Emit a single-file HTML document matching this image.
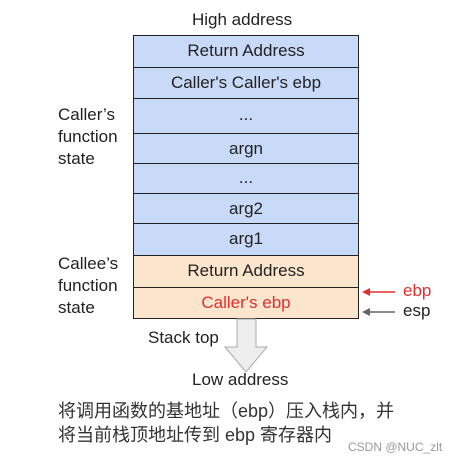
<!DOCTYPE html>
<html><head><style>
body{margin:0;width:456px;height:463px;background:#fff;position:relative;overflow:hidden;font-family:"Liberation Sans",Arial,sans-serif;color:#222}
.t{position:absolute;white-space:nowrap}
.row{position:absolute;left:133px;width:226px;border:1.5px solid #222;border-bottom:none;text-align:center;font-size:17px;box-sizing:border-box}
.b{background:#c9daf8}.o{background:#fce5cd}
.cn{position:absolute;left:58px;font-size:18px;font-family:"Liberation Sans","Noto Sans CJK SC",sans-serif;color:#333;white-space:nowrap}
</style></head><body>
<div class="t" style="left:192px;top:10px;font-size:17px">High address</div>
<div class="row b" style="top:35px;height:32px;line-height:30px">Return Address</div>
<div class="row b" style="top:67px;height:31px;line-height:30px">Caller's Caller's ebp</div>
<div class="row b" style="top:98px;height:35px;line-height:32px">...</div>
<div class="row b" style="top:133px;height:30px;line-height:30px">argn</div>
<div class="row b" style="top:163px;height:30px;line-height:28px">...</div>
<div class="row b" style="top:193px;height:30px;line-height:30px">arg2</div>
<div class="row b" style="top:223px;height:32px;line-height:30px">arg1</div>
<div class="row o" style="top:255px;height:32px;line-height:30px">Return Address</div>
<div class="row o" style="top:287px;height:32px;line-height:30px;color:#e03030;border-bottom:1.5px solid #222">Caller's ebp</div>
<div class="t" style="left:58px;top:104px;font-size:17px;line-height:22px">Caller’s<br>function<br>state</div>
<div class="t" style="left:58px;top:253px;font-size:17px;line-height:22px">Callee’s<br>function<br>state</div>
<svg style="position:absolute;left:0;top:0" width="456" height="463">
<line x1="395" y1="292" x2="368" y2="292" stroke="#e03030" stroke-width="1.5"/>
<polygon points="362,292 370,288 370,296" fill="#e03030"/>
<line x1="395" y1="312" x2="368" y2="312" stroke="#666" stroke-width="1.5"/>
<polygon points="362,312 370,308 370,316" fill="#666"/>
<polygon points="237,319 256,319 256,347 267,347 246,372 225,347 237,347" fill="#eee" stroke="#aaa" stroke-width="1"/>
</svg>
<div class="t" style="left:403px;top:281px;font-size:17px;color:#e03030">ebp</div>
<div class="t" style="left:403px;top:301px;font-size:17px">esp</div>
<div class="t" style="left:148px;top:328px;font-size:17px">Stack top</div>
<div class="t" style="left:192px;top:370px;font-size:17px">Low address</div>
<div class="cn" style="top:397px">将调用函数的基地址（ebp）压入栈内，并</div>
<div class="cn" style="top:421px">将当前栈顶地址传到 ebp 寄存器内</div>
<div class="t" style="left:348px;top:440px;font-size:12px;color:#999">CSDN @NUC_zlt</div>
</body></html>
